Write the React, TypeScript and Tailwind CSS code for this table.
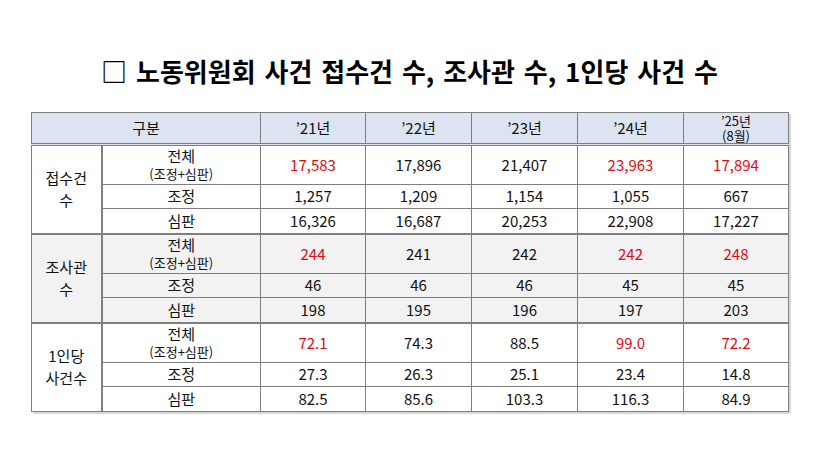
import React from 'react';

const FONT = { fontFamily: '"Noto Sans CJK KR", "Noto Sans", sans-serif' };

type Row = { label: string; sub?: string; values: string[]; red: boolean[] };
type Section = { title: string[]; bg: string; rows: Row[] };

const HL = [true, false, false, true, true];

const sections: Section[] = [
  {
    title: ['접수건', '수'],
    bg: 'bg-white',
    rows: [
      { label: '전체', sub: '(조정+심판)', values: ['17,583', '17,896', '21,407', '23,963', '17,894'], red: HL },
      { label: '조정', values: ['1,257', '1,209', '1,154', '1,055', '667'], red: [] },
      { label: '심판', values: ['16,326', '16,687', '20,253', '22,908', '17,227'], red: [] },
    ],
  },
  {
    title: ['조사관', '수'],
    bg: 'bg-[#f2f2f2]',
    rows: [
      { label: '전체', sub: '(조정+심판)', values: ['244', '241', '242', '242', '248'], red: HL },
      { label: '조정', values: ['46', '46', '46', '45', '45'], red: [] },
      { label: '심판', values: ['198', '195', '196', '197', '203'], red: [] },
    ],
  },
  {
    title: ['1인당', '사건수'],
    bg: 'bg-white',
    rows: [
      { label: '전체', sub: '(조정+심판)', values: ['72.1', '74.3', '88.5', '99.0', '72.2'], red: HL },
      { label: '조정', values: ['27.3', '26.3', '25.1', '23.4', '14.8'], red: [] },
      { label: '심판', values: ['82.5', '85.6', '103.3', '116.3', '84.9'], red: [] },
    ],
  },
];

const rowHeights = ['h-[40px]', 'h-[24px]', 'h-[25px]'];

export default function App() {
  return (
    <div className="w-[819px] h-[459px] bg-white text-[#111]" style={FONT}>
      <h1 className="pt-[53px] text-center text-[26px] font-semibold leading-[36px] [word-spacing:3px] text-black">
        □ 노동위원회 사건 접수건 수, 조사관 수, 1인당 사건 수
      </h1>

      <table className="ml-[31px] mt-[23px] w-[757px] table-fixed border-collapse border border-[#7f7f7f] text-center text-[14px] shadow-[2px_2px_0_#d9d9d9]">
        <colgroup>
          <col className="w-[70px]" />
          <col className="w-[159px]" />
          <col className="w-[105px]" />
          <col className="w-[106px]" />
          <col className="w-[106px]" />
          <col className="w-[106px]" />
          <col className="w-[105px]" />
        </colgroup>
        <thead>
          <tr className="h-[31px] bg-[#dce4f2] border-b-[3px] border-double border-[#7f7f7f]">
            <th colSpan={2} className="border border-[#7f7f7f] font-normal text-[15px]">구분</th>
            {['’21년', '’22년', '’23년', '’24년'].map((y) => (
              <th key={y} className="border border-[#7f7f7f] font-normal text-[15px]">{y}</th>
            ))}
            <th className="border border-[#7f7f7f] font-normal text-[13px] leading-[15px]">
              ’25년
              <br />
              (8월)
            </th>
          </tr>
        </thead>
        <tbody>
          {sections.map((s) =>
            s.rows.map((r, i) => (
              <tr
                key={s.title[0] + r.label}
                className={`${rowHeights[i]} ${s.bg} ${i === 0 ? 'border-t-2 border-[#7f7f7f]' : ''}`}
              >
                {i === 0 && (
                  <td rowSpan={3} className="border border-[#7f7f7f] border-r-2 text-[15px] leading-[22px]">
                    {s.title[0]}
                    <br />
                    {s.title[1]}
                  </td>
                )}
                <td className="border border-[#7f7f7f]">
                  {r.sub ? (
                    <>
                      <div className="text-[15px] leading-[18px]">{r.label}</div>
                      <div className="text-[13px] leading-[18px]">{r.sub}</div>
                    </>
                  ) : (
                    <span className="text-[15px]">{r.label}</span>
                  )}
                </td>
                {r.values.map((v, j) => (
                  <td
                    key={j}
                    className={`border border-[#7f7f7f] text-[15px] ${r.red[j] ? 'text-[#e00a14]' : ''}`}
                  >
                    {v}
                  </td>
                ))}
              </tr>
            ))
          )}
        </tbody>
      </table>
    </div>
  );
}
